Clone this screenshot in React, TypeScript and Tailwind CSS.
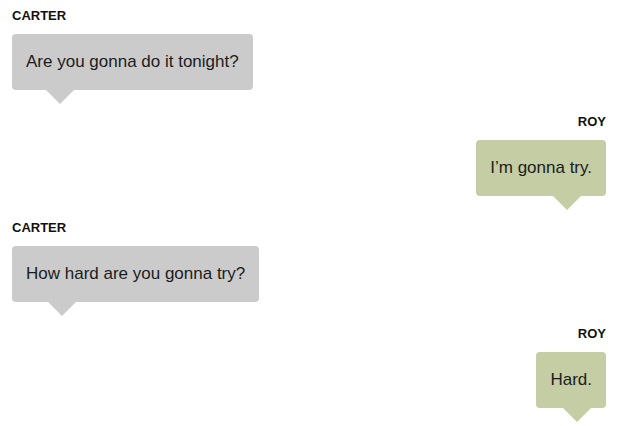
type Msg = {
  from: 'CARTER' | 'ROY';
  text: string;
  tail: string; // tail offset class
};

const messages: Msg[] = [
  { from: 'CARTER', text: 'Are you gonna do it tonight?', tail: 'left-[34px]' },
  { from: 'ROY', text: 'I’m gonna try.', tail: 'right-[25px]' },
  { from: 'CARTER', text: 'How hard are you gonna try?', tail: 'left-[36px]' },
  { from: 'ROY', text: 'Hard.', tail: 'right-[15px]' },
];

function Bubble({ msg }: { msg: Msg }) {
  const mine = msg.from === 'ROY';
  return (
    <div className={`flex flex-col mb-6 ${mine ? 'items-end' : 'items-start'}`}>
      <div className="text-[13px] leading-4 font-bold text-[#111] mb-[10px]">{msg.from}</div>
      <div
        className={`relative rounded px-[14px] py-4 text-[17px] leading-6 text-[#1c1c1c] ${
          mine ? 'bg-[#c4cda3]' : 'bg-[#cbcbcb]'
        }`}
      >
        {msg.text}
        <svg
          className={`absolute top-full ${msg.tail}`}
          width="28"
          height="14"
          viewBox="0 0 28 14"
        >
          <polygon points="0,0 28,0 14,14" fill={mine ? '#c4cda3' : '#cbcbcb'} />
        </svg>
      </div>
    </div>
  );
}

export default function App() {
  return (
    <div className="w-[620px] h-[426px] bg-white pl-3 pr-[14px] pt-2 overflow-hidden font-['Liberation_Sans',Arial,sans-serif]">
      {messages.map((m, i) => (
        <Bubble key={i} msg={m} />
      ))}
    </div>
  );
}
